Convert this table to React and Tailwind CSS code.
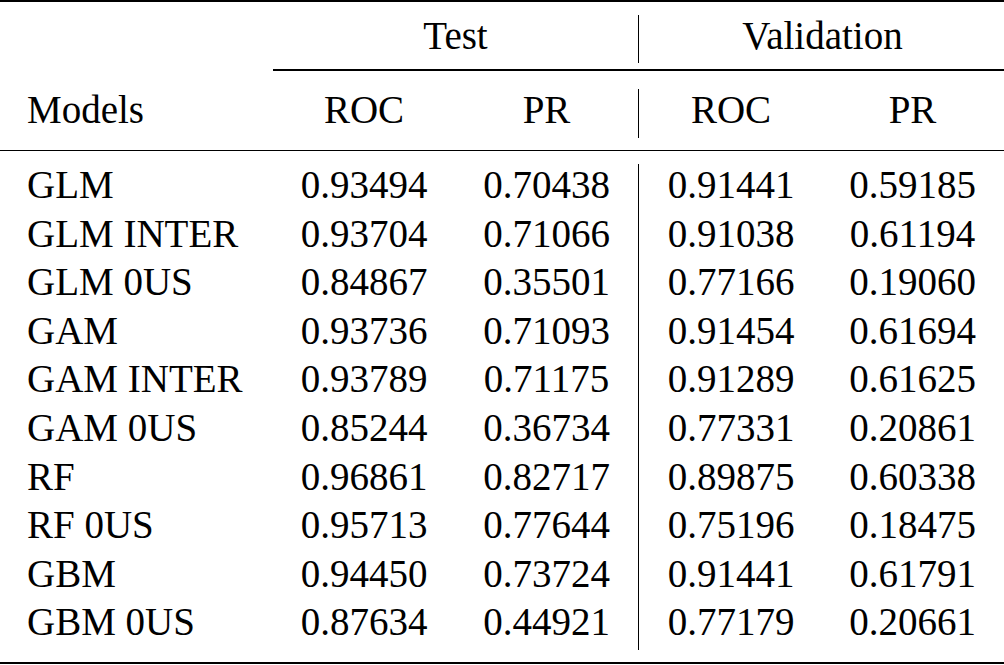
import React from "react";

const rows = [
  ["GLM", "0.93494", "0.70438", "0.91441", "0.59185"],
  ["GLM INTER", "0.93704", "0.71066", "0.91038", "0.61194"],
  ["GLM 0US", "0.84867", "0.35501", "0.77166", "0.19060"],
  ["GAM", "0.93736", "0.71093", "0.91454", "0.61694"],
  ["GAM INTER", "0.93789", "0.71175", "0.91289", "0.61625"],
  ["GAM 0US", "0.85244", "0.36734", "0.77331", "0.20861"],
  ["RF", "0.96861", "0.82717", "0.89875", "0.60338"],
  ["RF 0US", "0.95713", "0.77644", "0.75196", "0.18475"],
  ["GBM", "0.94450", "0.73724", "0.91441", "0.61791"],
  ["GBM 0US", "0.87634", "0.44921", "0.77179", "0.20661"],
];

function Col({ idx, className }) {
  return (
    <div className={className}>
      {rows.map((r, i) => (
        <div key={i} className="h-[48.6px] leading-[48.6px] whitespace-nowrap">
          {r[idx]}
        </div>
      ))}
    </div>
  );
}

export default function App() {
  return (
    <div className="w-[1004px] h-[665px] bg-white text-black text-[39px] overflow-hidden font-['Liberation_Serif','Times_New_Roman',serif]">
      {/* top rule */}
      <div className="h-[2px] bg-black" />

      {/* header row 1 */}
      <div className="flex h-[67px]">
        <div className="w-[273px]" />
        <div className="w-[365px] text-center pt-[9.5px] leading-[48.6px]">Test</div>
        <div className="w-px">
          <div className="mt-[13px] h-[48px] bg-black" />
        </div>
        <div className="flex-1 text-center pt-[9.5px] leading-[48.6px] pl-[2px]">Validation</div>
      </div>

      {/* cmidrule */}
      <div className="flex h-[1.5px]">
        <div className="w-[273px]" />
        <div className="flex-1 bg-black" />
      </div>

      {/* header row 2 */}
      <div className="flex h-[79.5px] leading-[48.6px]">
        <div className="w-[273px] pl-[27px] pt-[15px]">Models</div>
        <div className="w-[182px] text-center pt-[15px]">ROC</div>
        <div className="w-[183px] text-center pt-[15px]">PR</div>
        <div className="w-px">
          <div className="mt-[18px] h-[49px] bg-black" />
        </div>
        <div className="w-[184px] text-center pt-[15px]">ROC</div>
        <div className="flex-1 text-center pt-[15px] pr-[2px]">PR</div>
      </div>

      {/* midrule */}
      <div className="h-[1.3px] bg-black" />

      {/* body */}
      <div className="flex h-[511px] pt-[9.8px]">
        <Col idx={0} className="w-[273px] pl-[27px]" />
        <Col idx={1} className="w-[182px] text-center" />
        <Col idx={2} className="w-[183px] text-center" />
        <div className="w-px">
          <div className="mt-[3px] h-[486px] bg-black" />
        </div>
        <Col idx={3} className="w-[184px] text-center" />
        <Col idx={4} className="flex-1 text-center pr-[2px]" />
      </div>

      {/* bottom rule */}
      <div className="h-[2px] bg-black" />
    </div>
  );
}
